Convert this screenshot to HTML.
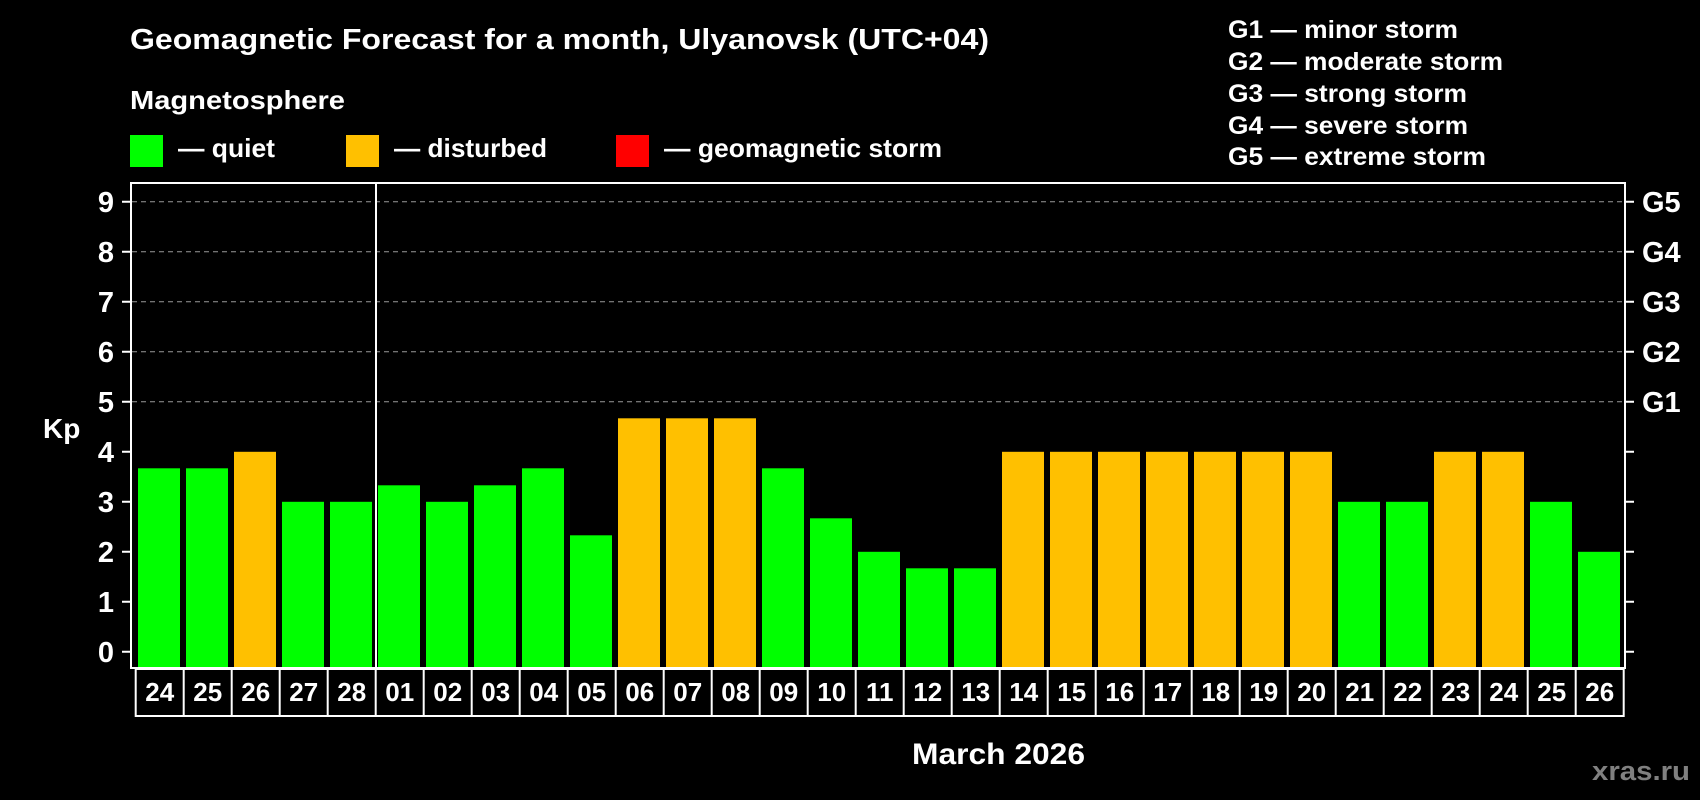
<!DOCTYPE html>
<html><head><meta charset="utf-8"><style>
html,body{margin:0;padding:0;background:#000;width:1700px;height:800px;overflow:hidden}
svg{display:block}
text{font-family:"Liberation Sans",Arial,sans-serif;font-weight:bold;fill:#fff}
.d{font-size:26px;text-anchor:middle}
.l{font-size:29px;text-anchor:middle}
.r{font-size:29px}
.g{fill:#00ff00}.o{fill:#ffc000}
</style></head><body>
<svg width="1700" height="800" viewBox="0 0 1700 800" xmlns="http://www.w3.org/2000/svg">
<rect width="1700" height="800" fill="#000"/>
<text x="130" y="49" font-size="29" textLength="859" lengthAdjust="spacingAndGlyphs">Geomagnetic Forecast for a month, Ulyanovsk (UTC+04)</text>
<text x="130" y="109" font-size="26" textLength="215" lengthAdjust="spacingAndGlyphs">Magnetosphere</text>
<rect x="130" y="135" width="33" height="32" fill="#00ff00"/>
<text x="178" y="157" font-size="26" textLength="97" lengthAdjust="spacingAndGlyphs">— quiet</text>
<rect x="346" y="135" width="33" height="32" fill="#ffc000"/>
<text x="394" y="157" font-size="26" textLength="153" lengthAdjust="spacingAndGlyphs">— disturbed</text>
<rect x="616" y="135" width="33" height="32" fill="#ff0000"/>
<text x="664" y="157" font-size="26" textLength="278" lengthAdjust="spacingAndGlyphs">— geomagnetic storm</text>
<g font-size="25">
<text x="1228" y="38" textLength="230" lengthAdjust="spacingAndGlyphs">G1 — minor storm</text>
<text x="1228" y="70" textLength="275" lengthAdjust="spacingAndGlyphs">G2 — moderate storm</text>
<text x="1228" y="102" textLength="239" lengthAdjust="spacingAndGlyphs">G3 — strong storm</text>
<text x="1228" y="134" textLength="240" lengthAdjust="spacingAndGlyphs">G4 — severe storm</text>
<text x="1228" y="165" textLength="258" lengthAdjust="spacingAndGlyphs">G5 — extreme storm</text>
</g>
<g stroke="#999" stroke-width="1" stroke-dasharray="5,4">
<line x1="132" x2="1624" y1="201.8" y2="201.8"/>
<line x1="132" x2="1624" y1="251.8" y2="251.8"/>
<line x1="132" x2="1624" y1="301.8" y2="301.8"/>
<line x1="132" x2="1624" y1="351.8" y2="351.8"/>
<line x1="132" x2="1624" y1="401.8" y2="401.8"/>
</g>
<g>
<rect class="g" x="138" y="468.3" width="42" height="199.7"/>
<rect class="g" x="186" y="468.3" width="42" height="199.7"/>
<rect class="o" x="234" y="451.8" width="42" height="216.2"/>
<rect class="g" x="282" y="501.8" width="42" height="166.2"/>
<rect class="g" x="330" y="501.8" width="42" height="166.2"/>
<rect class="g" x="378" y="485.3" width="42" height="182.7"/>
<rect class="g" x="426" y="501.8" width="42" height="166.2"/>
<rect class="g" x="474" y="485.3" width="42" height="182.7"/>
<rect class="g" x="522" y="468.3" width="42" height="199.7"/>
<rect class="g" x="570" y="535.3" width="42" height="132.7"/>
<rect class="o" x="618" y="418.3" width="42" height="249.7"/>
<rect class="o" x="666" y="418.3" width="42" height="249.7"/>
<rect class="o" x="714" y="418.3" width="42" height="249.7"/>
<rect class="g" x="762" y="468.3" width="42" height="199.7"/>
<rect class="g" x="810" y="518.3" width="42" height="149.7"/>
<rect class="g" x="858" y="551.8" width="42" height="116.2"/>
<rect class="g" x="906" y="568.3" width="42" height="99.7"/>
<rect class="g" x="954" y="568.3" width="42" height="99.7"/>
<rect class="o" x="1002" y="451.8" width="42" height="216.2"/>
<rect class="o" x="1050" y="451.8" width="42" height="216.2"/>
<rect class="o" x="1098" y="451.8" width="42" height="216.2"/>
<rect class="o" x="1146" y="451.8" width="42" height="216.2"/>
<rect class="o" x="1194" y="451.8" width="42" height="216.2"/>
<rect class="o" x="1242" y="451.8" width="42" height="216.2"/>
<rect class="o" x="1290" y="451.8" width="42" height="216.2"/>
<rect class="g" x="1338" y="501.8" width="42" height="166.2"/>
<rect class="g" x="1386" y="501.8" width="42" height="166.2"/>
<rect class="o" x="1434" y="451.8" width="42" height="216.2"/>
<rect class="o" x="1482" y="451.8" width="42" height="216.2"/>
<rect class="g" x="1530" y="501.8" width="42" height="166.2"/>
<rect class="g" x="1578" y="551.8" width="42" height="116.2"/>
</g>
<line x1="376" x2="376" y1="183" y2="668" stroke="#fff" stroke-width="2"/>
<rect x="131" y="183" width="1494" height="485" fill="none" stroke="#fff" stroke-width="2"/>
<g stroke="#fff" stroke-width="2">
<path d="M122 201.8H131M122 251.8H131M122 301.8H131M122 351.8H131M122 401.8H131M122 451.8H131M122 501.8H131M122 551.8H131M122 601.8H131M122 651.8H131"/>
<path d="M1625 201.8H1634M1625 251.8H1634M1625 301.8H1634M1625 351.8H1634M1625 401.8H1634M1625 451.8H1634M1625 501.8H1634M1625 551.8H1634M1625 601.8H1634M1625 651.8H1634"/>
</g>
<g>
<text class="l" x="106" y="212">9</text><text class="l" x="106" y="262">8</text><text class="l" x="106" y="312">7</text><text class="l" x="106" y="362">6</text><text class="l" x="106" y="412">5</text><text class="l" x="106" y="462">4</text><text class="l" x="106" y="512">3</text><text class="l" x="106" y="562">2</text><text class="l" x="106" y="612">1</text><text class="l" x="106" y="662">0</text>
<text class="r" x="1642" y="212">G5</text><text class="r" x="1642" y="262">G4</text><text class="r" x="1642" y="312">G3</text><text class="r" x="1642" y="362">G2</text><text class="r" x="1642" y="412">G1</text>
</g>
<text x="43" y="438" font-size="28">Kp</text>
<rect x="135.7" y="669" width="1488" height="47" fill="none" stroke="#fff" stroke-width="2"/>
<path stroke="#fff" stroke-width="2" d="M183.7 669V716M231.7 669V716M279.7 669V716M327.7 669V716M375.7 669V716M423.7 669V716M471.7 669V716M519.7 669V716M567.7 669V716M615.7 669V716M663.7 669V716M711.7 669V716M759.7 669V716M807.7 669V716M855.7 669V716M903.7 669V716M951.7 669V716M999.7 669V716M1047.7 669V716M1095.7 669V716M1143.7 669V716M1191.7 669V716M1239.7 669V716M1287.7 669V716M1335.7 669V716M1383.7 669V716M1431.7 669V716M1479.7 669V716M1527.7 669V716M1575.7 669V716"/>
<g>
<text class="d" x="159.7" y="701">24</text><text class="d" x="207.7" y="701">25</text><text class="d" x="255.7" y="701">26</text><text class="d" x="303.7" y="701">27</text><text class="d" x="351.7" y="701">28</text>
<text class="d" x="399.7" y="701">01</text><text class="d" x="447.7" y="701">02</text><text class="d" x="495.7" y="701">03</text><text class="d" x="543.7" y="701">04</text><text class="d" x="591.7" y="701">05</text>
<text class="d" x="639.7" y="701">06</text><text class="d" x="687.7" y="701">07</text><text class="d" x="735.7" y="701">08</text><text class="d" x="783.7" y="701">09</text><text class="d" x="831.7" y="701">10</text>
<text class="d" x="879.7" y="701">11</text><text class="d" x="927.7" y="701">12</text><text class="d" x="975.7" y="701">13</text><text class="d" x="1023.7" y="701">14</text><text class="d" x="1071.7" y="701">15</text>
<text class="d" x="1119.7" y="701">16</text><text class="d" x="1167.7" y="701">17</text><text class="d" x="1215.7" y="701">18</text><text class="d" x="1263.7" y="701">19</text><text class="d" x="1311.7" y="701">20</text>
<text class="d" x="1359.7" y="701">21</text><text class="d" x="1407.7" y="701">22</text><text class="d" x="1455.7" y="701">23</text><text class="d" x="1503.7" y="701">24</text><text class="d" x="1551.7" y="701">25</text><text class="d" x="1599.7" y="701">26</text>
</g>
<text x="912" y="764" font-size="30" textLength="173" lengthAdjust="spacingAndGlyphs">March 2026</text>
<text x="1592" y="780" font-size="27" style="fill:#808080" textLength="98" lengthAdjust="spacingAndGlyphs">xras.ru</text>
</svg>
</body></html>
